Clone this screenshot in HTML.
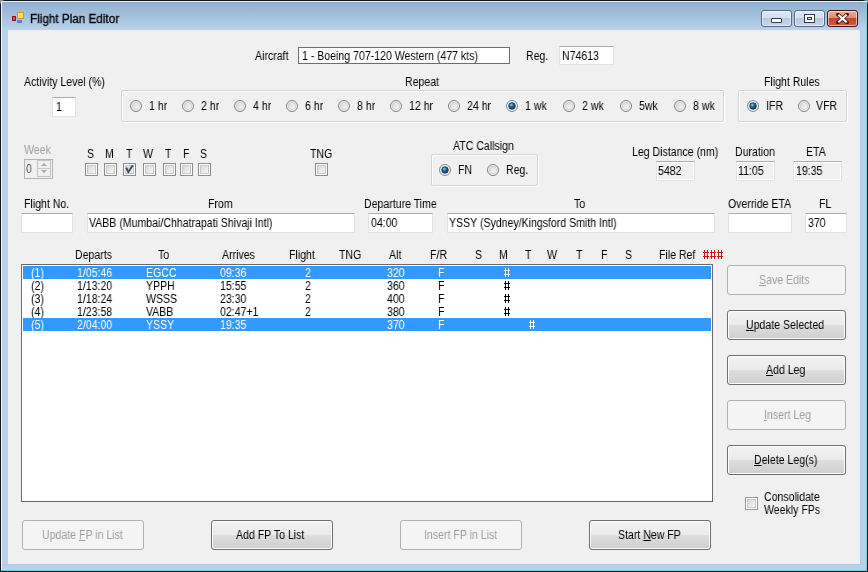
<!DOCTYPE html><html><head><meta charset="utf-8"><style>
html,body{margin:0;padding:0;width:868px;height:572px;overflow:hidden;background:#8a9399}
.t{position:absolute;font:12px/12px "Liberation Sans",sans-serif;white-space:nowrap;transform-origin:0 0;transform:scaleX(0.88);color:#000;will-change:transform}
.w{position:absolute;left:0;top:0;width:866px;height:570px;border:1px solid #111a20;border-radius:5px 5px 0 0;background:#b9d1ea;overflow:hidden}
</style></head><body>
<div class="w"></div>

<div style="position:absolute;left:1px;top:1px;width:866px;height:1px;background:#e6eef3;border-radius:4px 4px 0 0"></div>
<div style="position:absolute;left:1px;top:2px;width:866px;height:28px;background:linear-gradient(#94a9bd 0px,#93b2d6 2px,#9ebad8 9px,#a8c4df 17px,#b3cfe8 25px,#c0d3e4 28px)"></div>
<div style="position:absolute;left:1px;top:2px;width:1px;height:569px;background:#f2f6fa"></div>
<div style="position:absolute;left:866px;top:2px;width:1px;height:569px;background:#86ccd6"></div>
<div style="position:absolute;left:1px;top:570px;width:866px;height:1px;background:#78c4d0"></div>
<div style="position:absolute;left:2px;top:30px;width:6px;height:540px;background:#b9d2ea"></div>
<div style="position:absolute;left:860px;top:30px;width:6px;height:540px;background:linear-gradient(90deg,#b2cde0,#b9d2ea 40%,#bdccee 80%,#b4d8ee)"></div>
<div style="position:absolute;left:2px;top:564px;width:864px;height:6px;background:linear-gradient(#aacde0,#b9d1e9 30%,#bdcbee 65%,#b2d8ee)"></div>
<div style="position:absolute;left:8px;top:30px;width:852px;height:534px;background:#f0f0f0"></div>
<div style="position:absolute;left:8px;top:30px;width:852px;height:1px;background:#e9eef6"></div>
<div style="position:absolute;left:8px;top:30px;width:1px;height:534px;background:#e8f0f8"></div>
<div style="position:absolute;left:859px;top:30px;width:1px;height:534px;background:#e8f0f8"></div>
<div style="position:absolute;left:8px;top:563px;width:852px;height:1px;background:#eaf2fa"></div>
<div style="position:absolute;left:12px;top:16px;width:2px;height:3px;background:#e04848;border:1px solid #901818"></div>
<div style="position:absolute;left:17px;top:12px;width:5px;height:5px;background:#fadc60;border:1px solid #c89a28"></div>
<div style="position:absolute;left:17px;top:20px;width:5px;height:3px;background:#5580e0"></div>
<div class="t" style="left:29.9px;top:13px;color:#000;transform:scaleX(0.975);-webkit-text-stroke:0.3px #000;">Flight Plan Editor</div>
<div style="position:absolute;left:761px;top:10px;width:29px;height:15px;border:1px solid #566a82;border-radius:3px;background:linear-gradient(#dfe9f5 0%,#d2dff0 45%,#b8c9de 50%,#c6d6ea 100%);box-shadow:inset 0 0 0 1px rgba(255,255,255,.55)"></div>
<div style="position:absolute;left:794px;top:10px;width:29px;height:15px;border:1px solid #566a82;border-radius:3px;background:linear-gradient(#dfe9f5 0%,#d2dff0 45%,#b8c9de 50%,#c6d6ea 100%);box-shadow:inset 0 0 0 1px rgba(255,255,255,.55)"></div>
<div style="position:absolute;left:827px;top:10px;width:29px;height:15px;border:1px solid #3a1a1a;border-radius:3px;background:linear-gradient(#f0a890 0%,#e48a78 45%,#c8442a 50%,#d05a40 100%);box-shadow:inset 0 0 0 1px rgba(255,255,255,.55)"></div>
<div style="position:absolute;left:771px;top:18px;width:9px;height:3px;background:#fff;border:1px solid #333c48;border-radius:1px"></div>
<div style="position:absolute;left:804px;top:14px;width:9px;height:7px;border:1px solid #333c48;background:#fff"></div>
<div style="position:absolute;left:807px;top:17px;width:3px;height:1px;border:1px solid #333c48;background:#dfe9f5"></div>
<svg style="position:absolute;left:836px;top:13px" width="13" height="11" viewBox="0 0 13 11"><path d="M2 1.5 L11 9.5 M11 1.5 L2 9.5" stroke="#3a2020" stroke-width="3.6" stroke-linecap="square"/><path d="M2.3 1.8 L10.7 9.2 M10.7 1.8 L2.3 9.2" stroke="#fff" stroke-width="2"/></svg>
<div class="t" style="left:254.5px;top:50px;">Aircraft</div>
<div style="position:absolute;left:298px;top:47px;width:210px;height:15px;border:1px solid #6d6d6d;background:#fff"></div>
<div class="t" style="left:302.3px;top:50px;">1 - Boeing 707-120 Western (477 kts)</div>
<div class="t" style="left:526.0px;top:50px;">Reg.</div>
<div style="position:absolute;left:559px;top:46px;width:53px;height:17px;border:1px solid #e3e3e3;border-top-color:#abadb3;background:#fff;"></div>
<div class="t" style="left:562.1px;top:50px;">N74613</div>
<div class="t" style="left:23.5px;top:76px;">Activity Level (%)</div>
<div style="position:absolute;left:52px;top:97px;width:22px;height:18px;border:1px solid #e3e3e3;border-top-color:#abadb3;background:#fff;"></div>
<div class="t" style="left:55.5px;top:101px;">1</div>
<div class="t" style="left:405.2px;top:76px;">Repeat</div>
<div style="position:absolute;left:122px;top:91px;width:601px;height:30px;border:1px solid #fff;border-radius:2px"></div>
<div style="position:absolute;left:121px;top:90px;width:601px;height:30px;border:1px solid #d5d5d5;border-radius:2px"></div>
<svg style="position:absolute;left:130px;top:100px" width="12" height="12" viewBox="0 0 12 12"><defs><linearGradient id="ru" x1="0" y1="0" x2="1" y2="1"><stop offset="0" stop-color="#d8d8d8"/><stop offset="1" stop-color="#f8f8f8"/></linearGradient></defs><circle cx="6" cy="6" r="5.5" fill="#f6f6f6" stroke="#7f7f7f" stroke-width="1"/><circle cx="6" cy="6" r="3.8" fill="url(#ru)" stroke="#c4c4c4" stroke-width="0.7"/></svg>
<div class="t" style="left:148.7px;top:100px;">1 hr</div>
<svg style="position:absolute;left:182px;top:100px" width="12" height="12" viewBox="0 0 12 12"><defs><linearGradient id="ru" x1="0" y1="0" x2="1" y2="1"><stop offset="0" stop-color="#d8d8d8"/><stop offset="1" stop-color="#f8f8f8"/></linearGradient></defs><circle cx="6" cy="6" r="5.5" fill="#f6f6f6" stroke="#7f7f7f" stroke-width="1"/><circle cx="6" cy="6" r="3.8" fill="url(#ru)" stroke="#c4c4c4" stroke-width="0.7"/></svg>
<div class="t" style="left:200.7px;top:100px;">2 hr</div>
<svg style="position:absolute;left:234px;top:100px" width="12" height="12" viewBox="0 0 12 12"><defs><linearGradient id="ru" x1="0" y1="0" x2="1" y2="1"><stop offset="0" stop-color="#d8d8d8"/><stop offset="1" stop-color="#f8f8f8"/></linearGradient></defs><circle cx="6" cy="6" r="5.5" fill="#f6f6f6" stroke="#7f7f7f" stroke-width="1"/><circle cx="6" cy="6" r="3.8" fill="url(#ru)" stroke="#c4c4c4" stroke-width="0.7"/></svg>
<div class="t" style="left:252.6px;top:100px;">4 hr</div>
<svg style="position:absolute;left:286px;top:100px" width="12" height="12" viewBox="0 0 12 12"><defs><linearGradient id="ru" x1="0" y1="0" x2="1" y2="1"><stop offset="0" stop-color="#d8d8d8"/><stop offset="1" stop-color="#f8f8f8"/></linearGradient></defs><circle cx="6" cy="6" r="5.5" fill="#f6f6f6" stroke="#7f7f7f" stroke-width="1"/><circle cx="6" cy="6" r="3.8" fill="url(#ru)" stroke="#c4c4c4" stroke-width="0.7"/></svg>
<div class="t" style="left:304.6px;top:100px;">6 hr</div>
<svg style="position:absolute;left:338px;top:100px" width="12" height="12" viewBox="0 0 12 12"><defs><linearGradient id="ru" x1="0" y1="0" x2="1" y2="1"><stop offset="0" stop-color="#d8d8d8"/><stop offset="1" stop-color="#f8f8f8"/></linearGradient></defs><circle cx="6" cy="6" r="5.5" fill="#f6f6f6" stroke="#7f7f7f" stroke-width="1"/><circle cx="6" cy="6" r="3.8" fill="url(#ru)" stroke="#c4c4c4" stroke-width="0.7"/></svg>
<div class="t" style="left:357.0px;top:100px;">8 hr</div>
<svg style="position:absolute;left:390px;top:100px" width="12" height="12" viewBox="0 0 12 12"><defs><linearGradient id="ru" x1="0" y1="0" x2="1" y2="1"><stop offset="0" stop-color="#d8d8d8"/><stop offset="1" stop-color="#f8f8f8"/></linearGradient></defs><circle cx="6" cy="6" r="5.5" fill="#f6f6f6" stroke="#7f7f7f" stroke-width="1"/><circle cx="6" cy="6" r="3.8" fill="url(#ru)" stroke="#c4c4c4" stroke-width="0.7"/></svg>
<div class="t" style="left:408.7px;top:100px;">12 hr</div>
<svg style="position:absolute;left:448px;top:100px" width="12" height="12" viewBox="0 0 12 12"><defs><linearGradient id="ru" x1="0" y1="0" x2="1" y2="1"><stop offset="0" stop-color="#d8d8d8"/><stop offset="1" stop-color="#f8f8f8"/></linearGradient></defs><circle cx="6" cy="6" r="5.5" fill="#f6f6f6" stroke="#7f7f7f" stroke-width="1"/><circle cx="6" cy="6" r="3.8" fill="url(#ru)" stroke="#c4c4c4" stroke-width="0.7"/></svg>
<div class="t" style="left:466.5px;top:100px;">24 hr</div>
<svg style="position:absolute;left:506px;top:100px" width="12" height="12" viewBox="0 0 12 12"><defs><radialGradient id="rd" cx="0.38" cy="0.32" r="0.75"><stop offset="0" stop-color="#8fd0f0"/><stop offset="0.4" stop-color="#2a6a9c"/><stop offset="1" stop-color="#0a2c4a"/></radialGradient></defs><circle cx="6" cy="6" r="5.5" fill="#eaf6fc" stroke="#858a8e" stroke-width="1"/><circle cx="6" cy="6" r="3.3" fill="url(#rd)" stroke="#103a58" stroke-width="0.8"/></svg>
<div class="t" style="left:524.5px;top:100px;">1 wk</div>
<svg style="position:absolute;left:563px;top:100px" width="12" height="12" viewBox="0 0 12 12"><defs><linearGradient id="ru" x1="0" y1="0" x2="1" y2="1"><stop offset="0" stop-color="#d8d8d8"/><stop offset="1" stop-color="#f8f8f8"/></linearGradient></defs><circle cx="6" cy="6" r="5.5" fill="#f6f6f6" stroke="#7f7f7f" stroke-width="1"/><circle cx="6" cy="6" r="3.8" fill="url(#ru)" stroke="#c4c4c4" stroke-width="0.7"/></svg>
<div class="t" style="left:581.6px;top:100px;">2 wk</div>
<svg style="position:absolute;left:620px;top:100px" width="12" height="12" viewBox="0 0 12 12"><defs><linearGradient id="ru" x1="0" y1="0" x2="1" y2="1"><stop offset="0" stop-color="#d8d8d8"/><stop offset="1" stop-color="#f8f8f8"/></linearGradient></defs><circle cx="6" cy="6" r="5.5" fill="#f6f6f6" stroke="#7f7f7f" stroke-width="1"/><circle cx="6" cy="6" r="3.8" fill="url(#ru)" stroke="#c4c4c4" stroke-width="0.7"/></svg>
<div class="t" style="left:638.6px;top:100px;">5wk</div>
<svg style="position:absolute;left:674px;top:100px" width="12" height="12" viewBox="0 0 12 12"><defs><linearGradient id="ru" x1="0" y1="0" x2="1" y2="1"><stop offset="0" stop-color="#d8d8d8"/><stop offset="1" stop-color="#f8f8f8"/></linearGradient></defs><circle cx="6" cy="6" r="5.5" fill="#f6f6f6" stroke="#7f7f7f" stroke-width="1"/><circle cx="6" cy="6" r="3.8" fill="url(#ru)" stroke="#c4c4c4" stroke-width="0.7"/></svg>
<div class="t" style="left:692.9px;top:100px;">8 wk</div>
<div class="t" style="left:763.9px;top:76px;">Flight Rules</div>
<div style="position:absolute;left:739px;top:91px;width:107px;height:30px;border:1px solid #fff;border-radius:2px"></div>
<div style="position:absolute;left:738px;top:90px;width:107px;height:30px;border:1px solid #d5d5d5;border-radius:2px"></div>
<svg style="position:absolute;left:747px;top:100px" width="12" height="12" viewBox="0 0 12 12"><defs><radialGradient id="rd" cx="0.38" cy="0.32" r="0.75"><stop offset="0" stop-color="#8fd0f0"/><stop offset="0.4" stop-color="#2a6a9c"/><stop offset="1" stop-color="#0a2c4a"/></radialGradient></defs><circle cx="6" cy="6" r="5.5" fill="#eaf6fc" stroke="#858a8e" stroke-width="1"/><circle cx="6" cy="6" r="3.3" fill="url(#rd)" stroke="#103a58" stroke-width="0.8"/></svg>
<div class="t" style="left:766.0px;top:100px;">IFR</div>
<svg style="position:absolute;left:798px;top:100px" width="12" height="12" viewBox="0 0 12 12"><defs><linearGradient id="ru" x1="0" y1="0" x2="1" y2="1"><stop offset="0" stop-color="#d8d8d8"/><stop offset="1" stop-color="#f8f8f8"/></linearGradient></defs><circle cx="6" cy="6" r="5.5" fill="#f6f6f6" stroke="#7f7f7f" stroke-width="1"/><circle cx="6" cy="6" r="3.8" fill="url(#ru)" stroke="#c4c4c4" stroke-width="0.7"/></svg>
<div class="t" style="left:816.3px;top:100px;">VFR</div>
<div class="t" style="left:23.7px;top:144px;color:#a0a0a0;">Week</div>
<div style="position:absolute;left:24px;top:159px;width:27px;height:18px;border:1px solid #b4b4b4;background:#f0f0f0"></div>
<div class="t" style="left:26.3px;top:163px;color:#505050;">0</div>
<div style="position:absolute;left:37px;top:160px;width:12px;height:15px;border:1px solid #c4c4c4;background:#eeeeee"></div>
<div style="position:absolute;left:38px;top:168px;width:12px;height:1px;background:#c8c8c8"></div>
<svg style="position:absolute;left:40px;top:162px" width="8" height="12" viewBox="0 0 8 12"><path d="M1 4 L4 1 L7 4Z M1 8 L4 11 L7 8Z" fill="#a8a8a8"/></svg>
<div class="t" style="left:87.2px;top:148px;">S</div>
<div style="position:absolute;left:85px;top:163px;width:11px;height:11px;border:1px solid #8e8f8f;background:#fff"><div style="position:absolute;left:1px;top:1px;width:7px;height:7px;border:1px solid #c6c9cd;background:linear-gradient(135deg,#d8d8d8,#f6f6f6)"></div></div>
<div class="t" style="left:105.3px;top:148px;">M</div>
<div style="position:absolute;left:104px;top:163px;width:11px;height:11px;border:1px solid #8e8f8f;background:#fff"><div style="position:absolute;left:1px;top:1px;width:7px;height:7px;border:1px solid #c6c9cd;background:linear-gradient(135deg,#d8d8d8,#f6f6f6)"></div></div>
<div class="t" style="left:125.5px;top:148px;">T</div>
<div style="position:absolute;left:123px;top:163px;width:11px;height:11px;border:1px solid #8e8f8f;background:#fff"><div style="position:absolute;left:1px;top:1px;width:7px;height:7px;border:1px solid #c6c9cd;background:linear-gradient(135deg,#d8d8d8,#f6f6f6)"></div><svg style="position:absolute;left:0;top:0" width="11" height="11" viewBox="0 0 11 11"><path d="M2.2 3.6 L4.3 8 L8.8 1.2" fill="none" stroke="#3d4b68" stroke-width="2"/></svg></div>
<div class="t" style="left:142.7px;top:148px;">W</div>
<div style="position:absolute;left:143px;top:163px;width:11px;height:11px;border:1px solid #8e8f8f;background:#fff"><div style="position:absolute;left:1px;top:1px;width:7px;height:7px;border:1px solid #c6c9cd;background:linear-gradient(135deg,#d8d8d8,#f6f6f6)"></div></div>
<div class="t" style="left:165.3px;top:148px;">T</div>
<div style="position:absolute;left:163px;top:163px;width:11px;height:11px;border:1px solid #8e8f8f;background:#fff"><div style="position:absolute;left:1px;top:1px;width:7px;height:7px;border:1px solid #c6c9cd;background:linear-gradient(135deg,#d8d8d8,#f6f6f6)"></div></div>
<div class="t" style="left:183.3px;top:148px;">F</div>
<div style="position:absolute;left:180px;top:163px;width:11px;height:11px;border:1px solid #8e8f8f;background:#fff"><div style="position:absolute;left:1px;top:1px;width:7px;height:7px;border:1px solid #c6c9cd;background:linear-gradient(135deg,#d8d8d8,#f6f6f6)"></div></div>
<div class="t" style="left:200.3px;top:148px;">S</div>
<div style="position:absolute;left:198px;top:163px;width:11px;height:11px;border:1px solid #8e8f8f;background:#fff"><div style="position:absolute;left:1px;top:1px;width:7px;height:7px;border:1px solid #c6c9cd;background:linear-gradient(135deg,#d8d8d8,#f6f6f6)"></div></div>
<div class="t" style="left:309.5px;top:148px;">TNG</div>
<div style="position:absolute;left:315px;top:163px;width:11px;height:11px;border:1px solid #8e8f8f;background:#fff"><div style="position:absolute;left:1px;top:1px;width:7px;height:7px;border:1px solid #c6c9cd;background:linear-gradient(135deg,#d8d8d8,#f6f6f6)"></div></div>
<div class="t" style="left:452.5px;top:140px;">ATC Callsign</div>
<div style="position:absolute;left:432px;top:155px;width:105px;height:30px;border:1px solid #fff;border-radius:2px"></div>
<div style="position:absolute;left:431px;top:154px;width:105px;height:30px;border:1px solid #d5d5d5;border-radius:2px"></div>
<svg style="position:absolute;left:439px;top:164px" width="12" height="12" viewBox="0 0 12 12"><defs><radialGradient id="rd" cx="0.38" cy="0.32" r="0.75"><stop offset="0" stop-color="#8fd0f0"/><stop offset="0.4" stop-color="#2a6a9c"/><stop offset="1" stop-color="#0a2c4a"/></radialGradient></defs><circle cx="6" cy="6" r="5.5" fill="#eaf6fc" stroke="#858a8e" stroke-width="1"/><circle cx="6" cy="6" r="3.3" fill="url(#rd)" stroke="#103a58" stroke-width="0.8"/></svg>
<div class="t" style="left:458.1px;top:164px;">FN</div>
<svg style="position:absolute;left:487px;top:164px" width="12" height="12" viewBox="0 0 12 12"><defs><linearGradient id="ru" x1="0" y1="0" x2="1" y2="1"><stop offset="0" stop-color="#d8d8d8"/><stop offset="1" stop-color="#f8f8f8"/></linearGradient></defs><circle cx="6" cy="6" r="5.5" fill="#f6f6f6" stroke="#7f7f7f" stroke-width="1"/><circle cx="6" cy="6" r="3.8" fill="url(#ru)" stroke="#c4c4c4" stroke-width="0.7"/></svg>
<div class="t" style="left:506.1px;top:164px;">Reg.</div>
<div class="t" style="left:632.2px;top:146px;">Leg Distance (nm)</div>
<div style="position:absolute;left:656px;top:161px;width:37px;height:18px;border:1px solid #e3e3e3;border-top-color:#abadb3;background:#f0f0f0;box-shadow:inset 0 0 0 1px #fff;"></div>
<div class="t" style="left:658.1px;top:165px;">5482</div>
<div class="t" style="left:735.2px;top:146px;">Duration</div>
<div style="position:absolute;left:736px;top:161px;width:37px;height:18px;border:1px solid #e3e3e3;border-top-color:#abadb3;background:#f0f0f0;box-shadow:inset 0 0 0 1px #fff;"></div>
<div class="t" style="left:738.0px;top:165px;">11:05</div>
<div class="t" style="left:805.9px;top:146px;">ETA</div>
<div style="position:absolute;left:793px;top:161px;width:47px;height:18px;border:1px solid #e3e3e3;border-top-color:#abadb3;background:#f0f0f0;box-shadow:inset 0 0 0 1px #fff;"></div>
<div class="t" style="left:795.7px;top:165px;">19:35</div>
<div class="t" style="left:23.9px;top:198px;">Flight No.</div>
<div style="position:absolute;left:21px;top:213px;width:50px;height:18px;border:1px solid #e3e3e3;border-top-color:#abadb3;background:#fff;"></div>
<div class="t" style="left:208.3px;top:198px;">From</div>
<div style="position:absolute;left:87px;top:213px;width:266px;height:18px;border:1px solid #e3e3e3;border-top-color:#abadb3;background:#fff;"></div>
<div class="t" style="left:88.9px;top:217px;">VABB (Mumbai/Chhatrapati Shivaji Intl)</div>
<div class="t" style="left:364.1px;top:198px;">Departure Time</div>
<div style="position:absolute;left:368px;top:213px;width:63px;height:18px;border:1px solid #e3e3e3;border-top-color:#abadb3;background:#fff;"></div>
<div class="t" style="left:371.0px;top:217px;">04:00</div>
<div class="t" style="left:573.5px;top:198px;">To</div>
<div style="position:absolute;left:447px;top:213px;width:266px;height:18px;border:1px solid #e3e3e3;border-top-color:#abadb3;background:#fff;"></div>
<div class="t" style="left:449.0px;top:217px;">YSSY (Sydney/Kingsford Smith Intl)</div>
<div class="t" style="left:728.1px;top:198px;">Override ETA</div>
<div style="position:absolute;left:728px;top:213px;width:62px;height:18px;border:1px solid #e3e3e3;border-top-color:#abadb3;background:#fff;"></div>
<div class="t" style="left:818.9px;top:198px;">FL</div>
<div style="position:absolute;left:805px;top:213px;width:40px;height:18px;border:1px solid #e3e3e3;border-top-color:#abadb3;background:#fff;"></div>
<div class="t" style="left:808.3px;top:217px;">370</div>
<div class="t" style="left:74.8px;top:249px;">Departs</div>
<div class="t" style="left:158.3px;top:249px;">To</div>
<div class="t" style="left:221.9px;top:249px;">Arrives</div>
<div class="t" style="left:288.8px;top:249px;">Flight</div>
<div class="t" style="left:339.1px;top:249px;">TNG</div>
<div class="t" style="left:389.1px;top:249px;">Alt</div>
<div class="t" style="left:429.8px;top:249px;">F/R</div>
<div class="t" style="left:474.8px;top:249px;">S</div>
<div class="t" style="left:498.7px;top:249px;">M</div>
<div class="t" style="left:524.8px;top:249px;">T</div>
<div class="t" style="left:547.3px;top:249px;">W</div>
<div class="t" style="left:575.7px;top:249px;">T</div>
<div class="t" style="left:600.6px;top:249px;">F</div>
<div class="t" style="left:624.5px;top:249px;">S</div>
<div class="t" style="left:659.2px;top:249px;">File Ref</div>
<div style="position:absolute;left:704px;top:250px;width:1px;height:9px;background:#d01818"></div>
<div style="position:absolute;left:707px;top:250px;width:1px;height:9px;background:#d01818"></div>
<div style="position:absolute;left:703px;top:252px;width:6px;height:1px;background:#d01818"></div>
<div style="position:absolute;left:703px;top:256px;width:6px;height:1px;background:#d01818"></div>
<div style="position:absolute;left:711px;top:250px;width:1px;height:9px;background:#d01818"></div>
<div style="position:absolute;left:714px;top:250px;width:1px;height:9px;background:#d01818"></div>
<div style="position:absolute;left:710px;top:252px;width:6px;height:1px;background:#d01818"></div>
<div style="position:absolute;left:710px;top:256px;width:6px;height:1px;background:#d01818"></div>
<div style="position:absolute;left:718px;top:250px;width:1px;height:9px;background:#d01818"></div>
<div style="position:absolute;left:721px;top:250px;width:1px;height:9px;background:#d01818"></div>
<div style="position:absolute;left:717px;top:252px;width:6px;height:1px;background:#d01818"></div>
<div style="position:absolute;left:717px;top:256px;width:6px;height:1px;background:#d01818"></div>
<div style="position:absolute;left:21px;top:264px;width:690px;height:236px;border:1px solid #6a6a6a;background:#fff"></div>
<div style="position:absolute;left:23px;top:266px;width:688px;height:13px;background:#3399ff"></div>
<div class="t" style="left:31.4px;top:267px;color:#fff;">(1)</div>
<div class="t" style="left:77.1px;top:267px;color:#fff;">1/05:46</div>
<div class="t" style="left:145.6px;top:267px;color:#fff;">EGCC</div>
<div class="t" style="left:220.1px;top:267px;color:#fff;">09:36</div>
<div class="t" style="left:305.1px;top:267px;color:#fff;">2</div>
<div class="t" style="left:387.1px;top:267px;color:#fff;">320</div>
<div class="t" style="left:437.9px;top:267px;color:#fff;">F</div>
<div style="position:absolute;left:505px;top:268px;width:1px;height:9px;background:#fff"></div>
<div style="position:absolute;left:508px;top:268px;width:1px;height:9px;background:#fff"></div>
<div style="position:absolute;left:504px;top:270px;width:6px;height:1px;background:#fff"></div>
<div style="position:absolute;left:504px;top:274px;width:6px;height:1px;background:#fff"></div>
<div class="t" style="left:31.4px;top:280px;color:#000;">(2)</div>
<div class="t" style="left:77.1px;top:280px;color:#000;">1/13:20</div>
<div class="t" style="left:145.6px;top:280px;color:#000;">YPPH</div>
<div class="t" style="left:220.1px;top:280px;color:#000;">15:55</div>
<div class="t" style="left:305.1px;top:280px;color:#000;">2</div>
<div class="t" style="left:387.1px;top:280px;color:#000;">360</div>
<div class="t" style="left:437.9px;top:280px;color:#000;">F</div>
<div style="position:absolute;left:505px;top:281px;width:1px;height:9px;background:#000"></div>
<div style="position:absolute;left:508px;top:281px;width:1px;height:9px;background:#000"></div>
<div style="position:absolute;left:504px;top:283px;width:6px;height:1px;background:#000"></div>
<div style="position:absolute;left:504px;top:287px;width:6px;height:1px;background:#000"></div>
<div class="t" style="left:31.4px;top:293px;color:#000;">(3)</div>
<div class="t" style="left:77.1px;top:293px;color:#000;">1/18:24</div>
<div class="t" style="left:145.6px;top:293px;color:#000;">WSSS</div>
<div class="t" style="left:220.1px;top:293px;color:#000;">23:30</div>
<div class="t" style="left:305.1px;top:293px;color:#000;">2</div>
<div class="t" style="left:387.1px;top:293px;color:#000;">400</div>
<div class="t" style="left:437.9px;top:293px;color:#000;">F</div>
<div style="position:absolute;left:505px;top:294px;width:1px;height:9px;background:#000"></div>
<div style="position:absolute;left:508px;top:294px;width:1px;height:9px;background:#000"></div>
<div style="position:absolute;left:504px;top:296px;width:6px;height:1px;background:#000"></div>
<div style="position:absolute;left:504px;top:300px;width:6px;height:1px;background:#000"></div>
<div class="t" style="left:31.4px;top:306px;color:#000;">(4)</div>
<div class="t" style="left:77.1px;top:306px;color:#000;">1/23:58</div>
<div class="t" style="left:145.6px;top:306px;color:#000;">VABB</div>
<div class="t" style="left:220.1px;top:306px;color:#000;">02:47+1</div>
<div class="t" style="left:305.1px;top:306px;color:#000;">2</div>
<div class="t" style="left:387.1px;top:306px;color:#000;">380</div>
<div class="t" style="left:437.9px;top:306px;color:#000;">F</div>
<div style="position:absolute;left:505px;top:307px;width:1px;height:9px;background:#000"></div>
<div style="position:absolute;left:508px;top:307px;width:1px;height:9px;background:#000"></div>
<div style="position:absolute;left:504px;top:309px;width:6px;height:1px;background:#000"></div>
<div style="position:absolute;left:504px;top:313px;width:6px;height:1px;background:#000"></div>
<div style="position:absolute;left:23px;top:318px;width:688px;height:13px;background:#3399ff"></div>
<div class="t" style="left:31.4px;top:319px;color:#fff;">(5)</div>
<div class="t" style="left:77.1px;top:319px;color:#fff;">2/04:00</div>
<div class="t" style="left:145.6px;top:319px;color:#fff;">YSSY</div>
<div class="t" style="left:220.1px;top:319px;color:#fff;">19:35</div>
<div class="t" style="left:387.1px;top:319px;color:#fff;">370</div>
<div class="t" style="left:437.9px;top:319px;color:#fff;">F</div>
<div style="position:absolute;left:530px;top:320px;width:1px;height:9px;background:#fff"></div>
<div style="position:absolute;left:533px;top:320px;width:1px;height:9px;background:#fff"></div>
<div style="position:absolute;left:529px;top:322px;width:6px;height:1px;background:#fff"></div>
<div style="position:absolute;left:529px;top:326px;width:6px;height:1px;background:#fff"></div>
<div style="position:absolute;left:727px;top:265px;width:117px;height:28px;border:1px solid #adb2b5;border-radius:3px;background:#f4f4f4"></div>
<div class="t" style="left:758.5px;top:274px;color:#a0a0a0;"><u>S</u>ave Edits</div>
<div style="position:absolute;left:727px;top:310px;width:117px;height:28px;border:1px solid #707070;border-radius:3px;box-shadow:inset 0 0 0 1px #fcfcfc;background:linear-gradient(#f2f2f2 0%,#ebebeb 48%,#dddddd 52%,#cfcfcf 100%)"></div>
<div class="t" style="left:745.8px;top:319px;color:#000;"><u>U</u>pdate Selected</div>
<div style="position:absolute;left:727px;top:355px;width:117px;height:28px;border:1px solid #707070;border-radius:3px;box-shadow:inset 0 0 0 1px #fcfcfc;background:linear-gradient(#f2f2f2 0%,#ebebeb 48%,#dddddd 52%,#cfcfcf 100%)"></div>
<div class="t" style="left:765.5px;top:364px;color:#000;"><u>A</u>dd Leg</div>
<div style="position:absolute;left:727px;top:400px;width:117px;height:28px;border:1px solid #adb2b5;border-radius:3px;background:#f4f4f4"></div>
<div class="t" style="left:763.5px;top:409px;color:#a0a0a0;"><u>I</u>nsert Leg</div>
<div style="position:absolute;left:727px;top:445px;width:117px;height:28px;border:1px solid #707070;border-radius:3px;box-shadow:inset 0 0 0 1px #fcfcfc;background:linear-gradient(#f2f2f2 0%,#ebebeb 48%,#dddddd 52%,#cfcfcf 100%)"></div>
<div class="t" style="left:753.5px;top:454px;color:#000;"><u>D</u>elete Leg(s)</div>
<div style="position:absolute;left:745px;top:497px;width:11px;height:11px;border:1px solid #9a9a9a;background:#fff"><div style="position:absolute;left:1px;top:1px;width:7px;height:7px;border:1px solid #c6c9cd;background:linear-gradient(135deg,#d8d8d8,#f6f6f6)"></div></div>
<div class="t" style="left:764.3px;top:491px;">Consolidate</div>
<div class="t" style="left:764.3px;top:504px;">Weekly FPs</div>
<div style="position:absolute;left:22px;top:520px;width:120px;height:28px;border:1px solid #adb2b5;border-radius:3px;background:#f4f4f4"></div>
<div class="t" style="left:41.9px;top:529px;color:#a0a0a0;">Update <u>F</u>P in List</div>
<div style="position:absolute;left:211px;top:520px;width:120px;height:28px;border:1px solid #707070;border-radius:3px;box-shadow:inset 0 0 0 1px #fcfcfc;background:linear-gradient(#f2f2f2 0%,#ebebeb 48%,#dddddd 52%,#cfcfcf 100%)"></div>
<div class="t" style="left:235.8px;top:529px;color:#000;">Add FP To List</div>
<div style="position:absolute;left:400px;top:520px;width:120px;height:28px;border:1px solid #adb2b5;border-radius:3px;background:#f4f4f4"></div>
<div class="t" style="left:423.7px;top:529px;color:#a0a0a0;">Insert FP in List</div>
<div style="position:absolute;left:589px;top:520px;width:120px;height:28px;border:1px solid #707070;border-radius:3px;box-shadow:inset 0 0 0 1px #fcfcfc;background:linear-gradient(#f2f2f2 0%,#ebebeb 48%,#dddddd 52%,#cfcfcf 100%)"></div>
<div class="t" style="left:617.5px;top:529px;color:#000;">Start <u>N</u>ew FP</div>
</body></html>
